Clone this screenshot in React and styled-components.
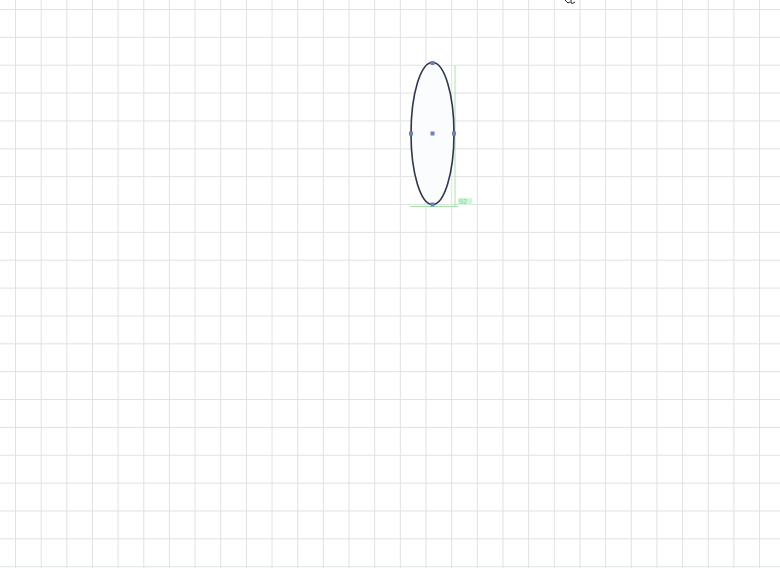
import React from "react";
import styled, { createGlobalStyle } from "styled-components";

const Global = createGlobalStyle`
  html, body { margin: 0; padding: 0; background: #ffffff; }
  body { font-family: "Liberation Sans", Arial, sans-serif; overflow: hidden; }
`;

const Canvas = styled.div`
  position: relative;
  width: 780px;
  height: 568px;
  overflow: hidden;
  background-color: #ffffff;
  background-image:
    linear-gradient(to right, #e0e1e4 1px, transparent 1px),
    linear-gradient(to bottom, #e0e1e4 1px, transparent 1px);
  background-size: 25.67px 27.87px;
  background-position: 15px 9px;
`;

const Artboard = styled.svg`
  position: absolute;
  left: 0;
  top: 0;
  width: 780px;
  height: 568px;
`;

const Anchor = ({ x, y }) => (
  <rect x={x - 2} y={y - 2} width="4" height="4" fill="#6b82bd" />
);

export default function App() {
  return (
    <>
      <Global />
      <Canvas>
        <Artboard viewBox="0 0 780 568">
          {/* smart guides */}
          <line x1="455" y1="65" x2="455" y2="206" stroke="#a6e3a6" strokeWidth="1" />
          <line x1="410" y1="206.5" x2="458" y2="206.5" stroke="#a6e3a6" strokeWidth="1" />
          <rect x="458" y="198" width="14" height="7" fill="#d6f5d6" />
          <text x="459" y="204" fontSize="7" fill="#86d486" fontFamily="Liberation Sans, sans-serif">92</text>
          {/* ellipse */}
          <ellipse cx="432.5" cy="133.5" rx="21.5" ry="71" fill="#fbfcfe" stroke="#2f3550" strokeWidth="1.6" />
          <Anchor x={432.5} y={63} />
          <Anchor x={411} y={133.5} />
          <Anchor x={454} y={133.5} />
          <Anchor x={432.5} y={204.5} />
          <Anchor x={432.5} y={133.5} />
          {/* cursor fragment */}
          <path d="M565 0 L568 3 L570 2 M571 0 L571 3 Q573 4 575 2" stroke="#222" strokeWidth="1" fill="none" />
        </Artboard>
      </Canvas>
    </>
  );
}
